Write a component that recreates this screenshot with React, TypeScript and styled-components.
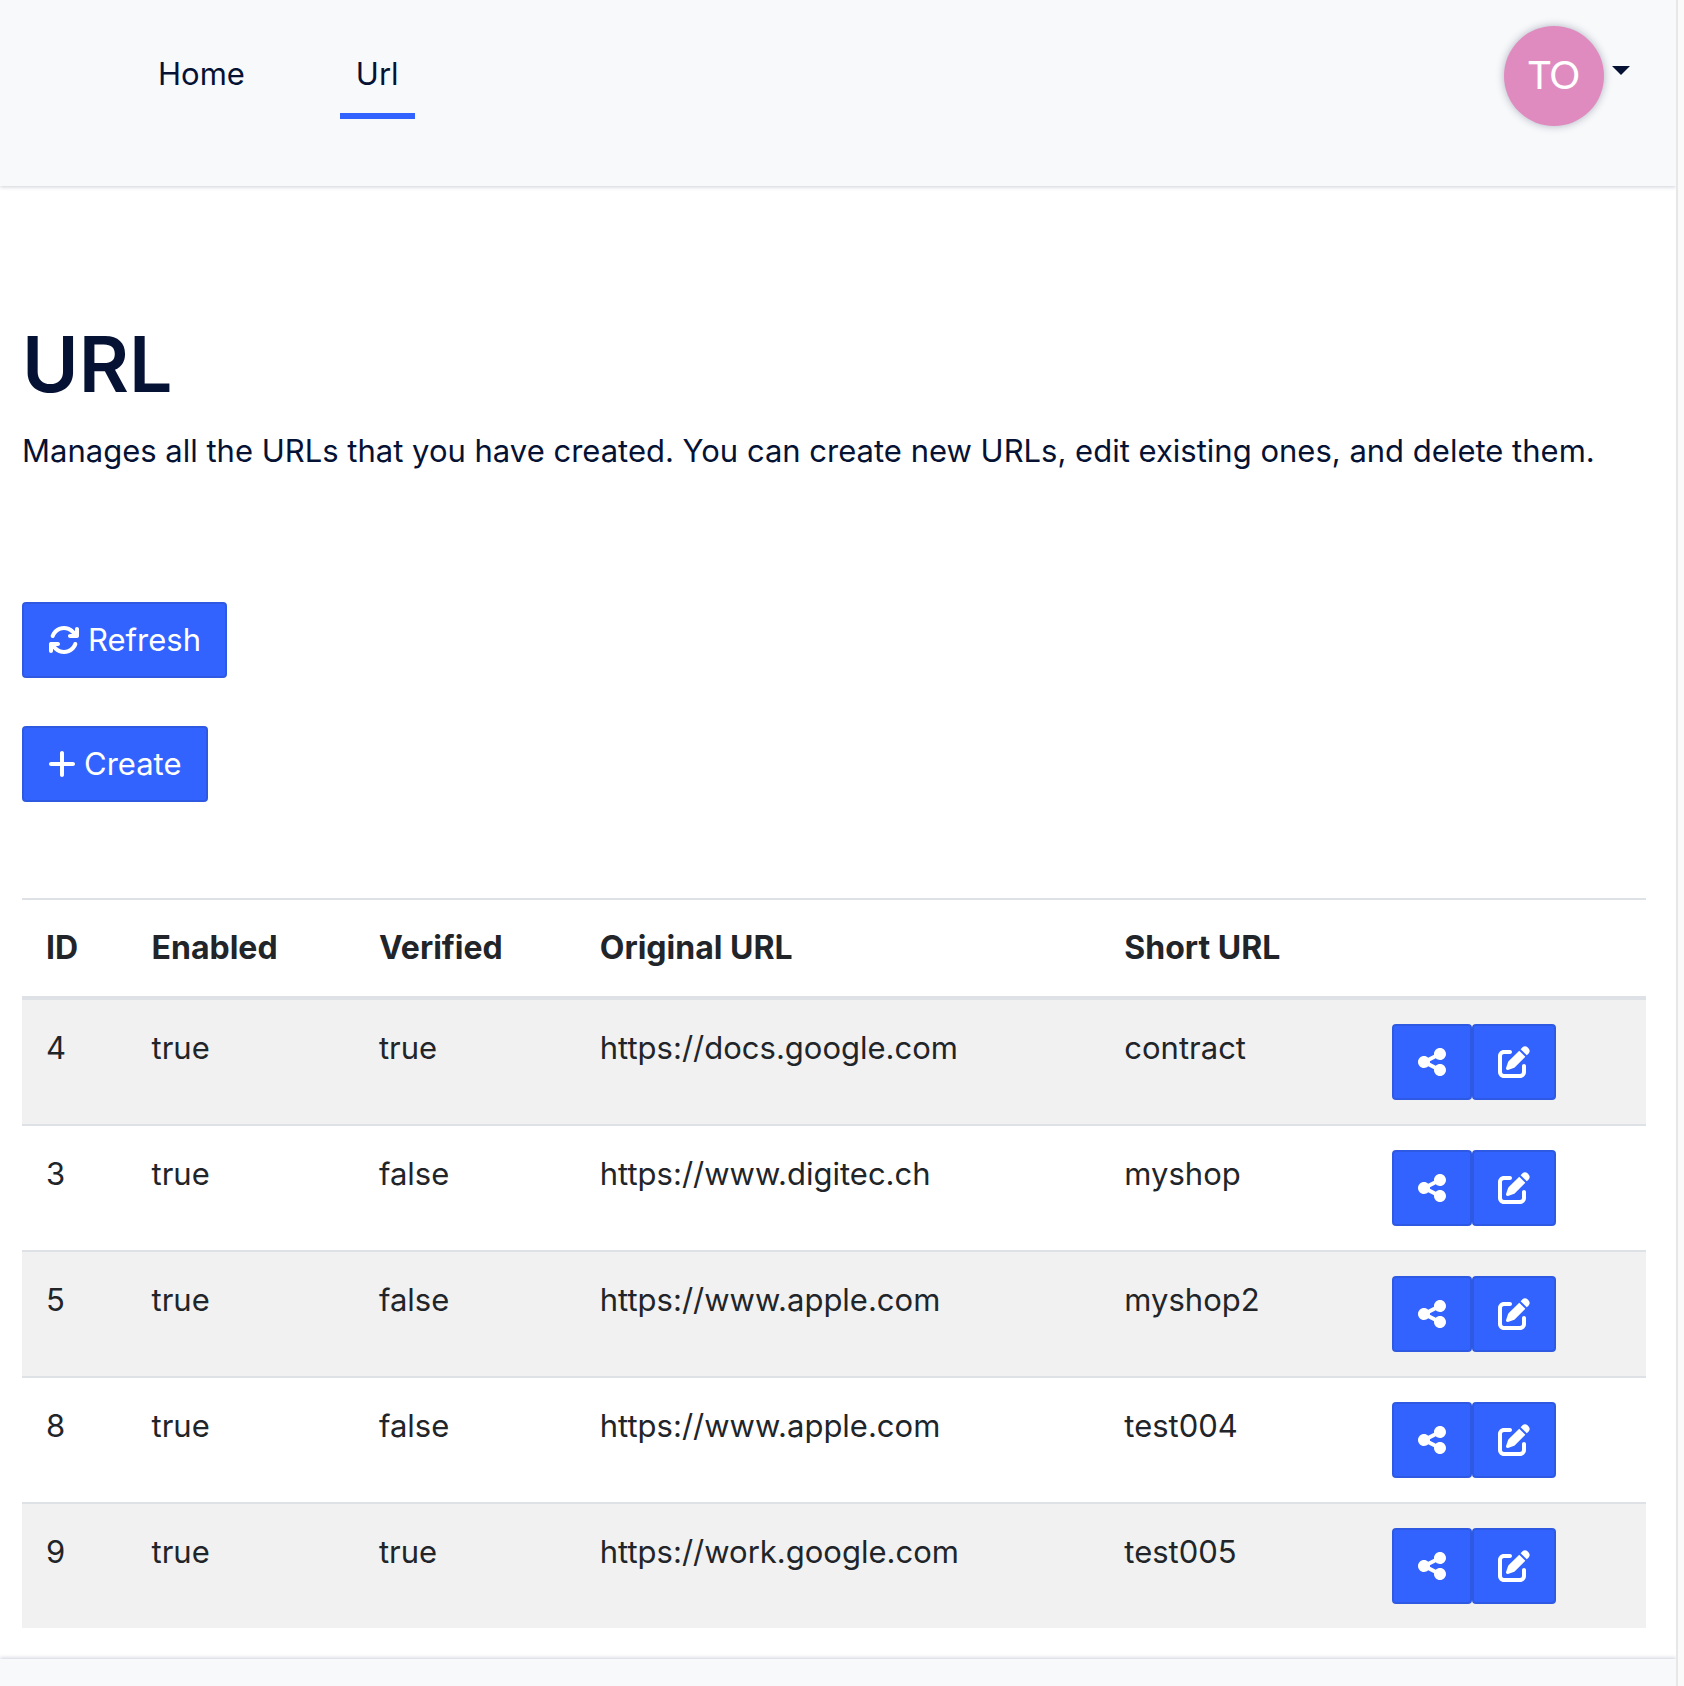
import React from "react";
import styled, { createGlobalStyle } from "styled-components";
import { FaArrowsRotate, FaPenToSquare, FaPlus, FaShareNodes } from "react-icons/fa6";

const GlobalStyle = createGlobalStyle`
  *, *::before, *::after {
    box-sizing: border-box;
  }
  body {
    margin: 0;
    background: #fff;
    color: #212529;
    font-family: Inter, "Liberation Sans", sans-serif;
    font-size: 31px;
    line-height: 48px;
  }
`;

const Shell = styled.div`
  display: grid;
  grid-template-columns: minmax(0, 1fr) 8px;
  min-height: 100vh;
`;

const Gutter = styled.div`
  background: #fafafa;
  border-left: 2px solid #e7e7e7;
`;

const Page = styled.div`
  display: flex;
  flex-direction: column;
  overflow: hidden;
`;

const Header = styled.header`
  display: flex;
  justify-content: space-between;
  align-items: flex-start;
  height: 186px;
  padding: 26px 46px 0 142px;
  background: #f8f9fb;
  box-shadow: 0 1px 4px rgba(6, 21, 56, 0.2);
`;

const Nav = styled.nav`
  display: flex;
  gap: 79px;
  padding-top: 7px;
`;

const NavLink = styled.a<{ $active?: boolean }>`
  padding: 17px 16px 15px;
  border-bottom: 6px solid ${(p) => (p.$active ? "#3363ff" : "transparent")};
  color: #061234;
  text-decoration: none;
`;

const AccountButton = styled.button`
  display: flex;
  align-items: center;
  gap: 8px;
  padding: 0;
  border: 0;
  background: none;
  cursor: pointer;
`;

const Avatar = styled.span`
  display: grid;
  place-items: center;
  width: 100px;
  height: 100px;
  padding-bottom: 4px;
  border-radius: 50%;
  background: #e08bbf;
  box-shadow: 0 0 8px rgba(6, 21, 56, 0.3);
  color: #fff;
  font-family: Lato, "Open Sans", sans-serif;
  font-size: 38px;
  font-weight: 400;
`;

const Caret = styled.span`
  margin-bottom: 12px;
  border-top: 9px solid #061234;
  border-right: 9px solid transparent;
  border-left: 9px solid transparent;
`;

const Main = styled.main`
  padding: 130px 30px 31px 22px;
`;

const Title = styled.h1`
  margin: 0 0 15px;
  color: #061234;
  font-size: 77px;
  font-weight: 600;
  line-height: 96px;
`;

const Lead = styled.p`
  margin: 0 0 127px;
  color: #061234;
`;

const Toolbar = styled.div`
  display: flex;
  flex-direction: column;
  align-items: flex-start;
  gap: 48px;
  margin-bottom: 96px;
`;

const Button = styled.button`
  display: inline-flex;
  align-items: center;
  gap: 8px;
  height: 76px;
  padding: 0 24px;
  border: 2px solid #2e5ae3;
  border-radius: 4px;
  background: #3363ff;
  color: #fff;
  font: inherit;
  cursor: pointer;
`;

const Icon = styled.span<{ $narrow?: boolean }>`
  display: flex;
  justify-content: center;
  width: ${(p) => (p.$narrow ? 28 : 32)}px;

  svg {
    flex: none;
    width: 32px;
    height: 32px;
  }
`;

const Table = styled.table`
  width: 100%;
  border-spacing: 0;
  table-layout: fixed;
`;

const Column = styled.col<{ $share?: number }>`
  width: ${(p) => (p.$share ? `${p.$share}%` : "auto")};
`;

const HeadCell = styled.th`
  padding: 24px;
  border-top: 2px solid #dee2e6;
  border-bottom: 4px solid #dee2e6;
  font-size: 32px;
  font-weight: 700;
  text-align: left;
  white-space: nowrap;
`;

const Cell = styled.td`
  padding: 24px;
  border-top: 2px solid #dee2e6;
  vertical-align: top;
`;

const Row = styled.tr`
  &:nth-child(odd) {
    background: #f1f1f1;
  }
  &:first-child ${Cell} {
    border-top: 0;
  }
`;

const Actions = styled.div`
  display: flex;
`;

const Footer = styled.footer`
  flex: 1;
  min-height: 27px;
  background: #f8f9fb;
  box-shadow: 0 -1px 4px rgba(6, 21, 86, 0.2);
`;

const rows = [
  { id: 4, enabled: true, verified: true, original: "https://docs.google.com", short: "contract" },
  { id: 3, enabled: true, verified: false, original: "https://www.digitec.ch", short: "myshop" },
  { id: 5, enabled: true, verified: false, original: "https://www.apple.com", short: "myshop2" },
  { id: 8, enabled: true, verified: false, original: "https://www.apple.com", short: "test004" },
  { id: 9, enabled: true, verified: true, original: "https://work.google.com", short: "test005" },
];

const columnShares = [6.5, 14, 13.6, 32.3, 16.5];

export default function App() {
  return (
    <>
      <GlobalStyle />
      <Shell>
        <Page>
          <Header>
            <Nav>
              <NavLink href="#home">Home</NavLink>
              <NavLink href="#url" $active aria-current="page">
                Url
              </NavLink>
            </Nav>
            <AccountButton type="button" aria-haspopup="menu">
              <Avatar>TO</Avatar>
              <Caret />
            </AccountButton>
          </Header>
          <Main>
            <Title>URL</Title>
            <Lead>
              Manages all the URLs that you have created. You can create new URLs, edit existing ones, and delete them.
            </Lead>
            <Toolbar>
              <Button type="button">
                <Icon>
                  <FaArrowsRotate />
                </Icon>
                Refresh
              </Button>
              <Button type="button">
                <Icon $narrow>
                  <FaPlus />
                </Icon>
                Create
              </Button>
            </Toolbar>
            <Table>
              <colgroup>
                {columnShares.map((share, i) => (
                  <Column key={i} $share={share} />
                ))}
                <Column />
              </colgroup>
              <thead>
                <tr>
                  <HeadCell scope="col">ID</HeadCell>
                  <HeadCell scope="col">Enabled</HeadCell>
                  <HeadCell scope="col">Verified</HeadCell>
                  <HeadCell scope="col">Original URL</HeadCell>
                  <HeadCell scope="col">Short URL</HeadCell>
                  <HeadCell scope="col" />
                </tr>
              </thead>
              <tbody>
                {rows.map((row) => (
                  <Row key={row.id}>
                    <Cell>{row.id}</Cell>
                    <Cell>{String(row.enabled)}</Cell>
                    <Cell>{String(row.verified)}</Cell>
                    <Cell>{row.original}</Cell>
                    <Cell>{row.short}</Cell>
                    <Cell>
                      <Actions>
                        <Button type="button" aria-label="Share">
                          <Icon $narrow>
                            <FaShareNodes />
                          </Icon>
                        </Button>
                        <Button type="button" aria-label="Edit">
                          <Icon>
                            <FaPenToSquare />
                          </Icon>
                        </Button>
                      </Actions>
                    </Cell>
                  </Row>
                ))}
              </tbody>
            </Table>
          </Main>
          <Footer />
        </Page>
        <Gutter />
      </Shell>
    </>
  );
}
